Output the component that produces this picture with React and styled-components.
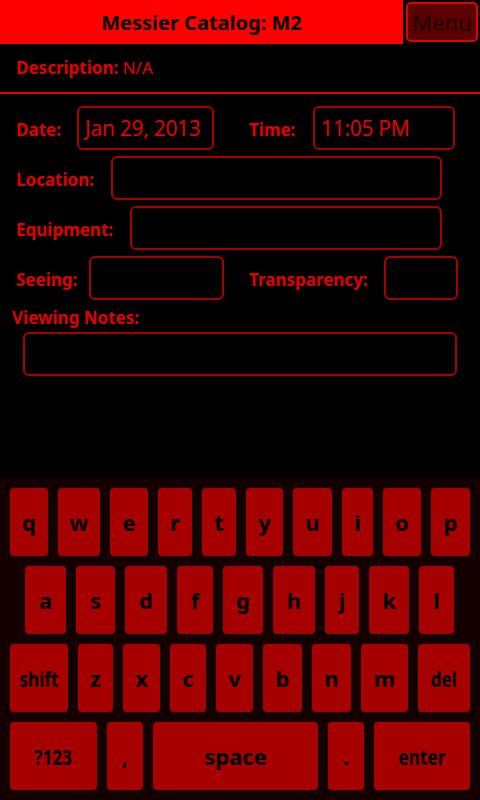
import React from "react";
import styled, {createGlobalStyle} from "styled-components";

const GlobalStyle = createGlobalStyle`
  html, body {
    margin: 0;
    padding: 0;
    background: #000;
  }
  body {
    font-family: "Noto Sans", "Open Sans", "DejaVu Sans", sans-serif;
  }
`

const rows = [
  [
    {k: "q", w: 38}, {k: "w", w: 42}, {k: "e", w: 38}, {k: "r", w: 34}, {k: "t", w: 34},
    {k: "y", w: 37}, {k: "u", w: 39}, {k: "i", w: 31}, {k: "o", w: 38}, {k: "p", w: 39},
  ],
  [
    {k: "a", w: 41}, {k: "s", w: 39}, {k: "d", w: 42}, {k: "f", w: 36}, {k: "g", w: 40},
    {k: "h", w: 42}, {k: "j", w: 34}, {k: "k", w: 40}, {k: "l", w: 35},
  ],
  [
    {k: "shift", w: 58, small: true}, {k: "z", w: 35}, {k: "x", w: 37}, {k: "c", w: 36},
    {k: "v", w: 37}, {k: "b", w: 39}, {k: "n", w: 39}, {k: "m", w: 47}, {k: "del", w: 52, small: true},
  ],
  [
    {k: "?123", w: 87, small: true}, {k: ",", w: 36}, {k: "space", w: 165}, {k: ".", w: 36},
    {k: "enter", w: 96, small: true},
  ],
];

const App = () => {
  return (
    <Screen>
      <GlobalStyle />
      <Header>
        <Title>Messier Catalog: M2</Title>
        <MenuButton>Menu</MenuButton>
      </Header>
      <Description>
        <b>Description:</b> N/A
      </Description>
      <Form>
        <Row>
          <Label $w={61}>Date:</Label>
          <Field $w={137}>Jan 29, 2013</Field>
          <Label $w={64} $ml={35}>Time:</Label>
          <Field $w={142}>11:05 PM</Field>
        </Row>
        <Row>
          <Label $w={95}>Location:</Label>
          <Field $w={331} />
        </Row>
        <Row>
          <Label $w={114}>Equipment:</Label>
          <Field $w={312} />
        </Row>
        <Row>
          <Label $w={73}>Seeing:</Label>
          <Field $w={135} />
          <Label $w={135} $ml={25}>Transparency:</Label>
          <Field $w={74} />
        </Row>
        <NotesLabel>Viewing Notes:</NotesLabel>
        <NotesField />
      </Form>
      <Keyboard>
        {rows.map((row, i) => (
          <KeyRow key={i} $center={i === 1}>
            {row.map(key => (
              <Key key={key.k} style={{width: key.w}}>
                <KeyText $small={key.small}>{key.k}</KeyText>
              </Key>
            ))}
          </KeyRow>
        ))}
      </Keyboard>
    </Screen>
  );
};

export default App;

const Screen = styled.div`
  width: 480px;
  height: 800px;
  background: #000;
  display: flex;
  flex-direction: column;
  overflow: hidden;
`

const Header = styled.div`
  display: flex;
  height: 44px;
  align-items: stretch;
`

const Title = styled.div`
  width: 403px;
  background: #ff0000;
  color: #000;
  font-size: 20px;
  font-weight: 700;
  display: flex;
  align-items: center;
  justify-content: center;
`

const MenuButton = styled.div`
  margin: 2px 2px 2px 3px;
  flex: 1;
  background: #5a0000;
  border: 2px solid #e00000;
  border-radius: 5px;
  color: #1a0000;
  font-size: 22px;
  display: flex;
  align-items: center;
  justify-content: center;
  box-sizing: border-box;
`

const Description = styled.div`
  height: 50px;
  box-sizing: border-box;
  border-bottom: 2px solid #e00000;
  padding: 12px 16px 0;
  color: #e00000;
  font-size: 17px;
  b {
    font-weight: 700;
  }
`

const Form = styled.div`
  padding: 12px 0 0 0;
  display: flex;
  flex-direction: column;
  gap: 6px;
  flex: 1;
`

const Row = styled.div`
  display: flex;
  align-items: center;
  padding-left: 16px;
`

const Label = styled.span`
  width: ${p => p.$w}px;
  flex-shrink: 0;
  color: #e00000;
  font-size: 17px;
  font-weight: 700;
  margin-left: ${p => p.$ml || 0}px;
  padding-top: 2px;
  white-space: nowrap;
`

const Field = styled.div`
  width: ${p => p.$w}px;
  height: 44px;
  box-sizing: border-box;
  border: 2px solid #a80000;
  border-radius: 6px;
  color: #e00000;
  font-size: 21px;
  letter-spacing: -0.3px;
  font-weight: 400;
  padding: 0 6px;
  display: flex;
  align-items: center;
  white-space: nowrap;
`

const NotesLabel = styled.div`
  color: #e00000;
  font-size: 17px;
  font-weight: 700;
  padding-left: 12px;
  margin-bottom: -3px;
`

const NotesField = styled(Field)`
  margin-left: 23px;
  width: 434px;
`

const Keyboard = styled.div`
  height: 322px;
  box-sizing: border-box;
  background: #140000;
  padding: 10px 10px 0;
  display: flex;
  flex-direction: column;
  gap: 10px;
`

const KeyRow = styled.div`
  display: flex;
  gap: 10px;
  padding-left: ${p => p.$center ? 15 : 0}px;
`

const Key = styled.div`
  height: 68px;
  border-radius: 4px;
  background: #a60000;
  display: flex;
  align-items: center;
  justify-content: center;
`

const KeyText = styled.span`
  color: #000;
  font-size: 22px;
  font-weight: 700;
  display: inline-block;
  transform: ${p => p.$small ? 'scaleX(0.78)' : 'none'};
`
